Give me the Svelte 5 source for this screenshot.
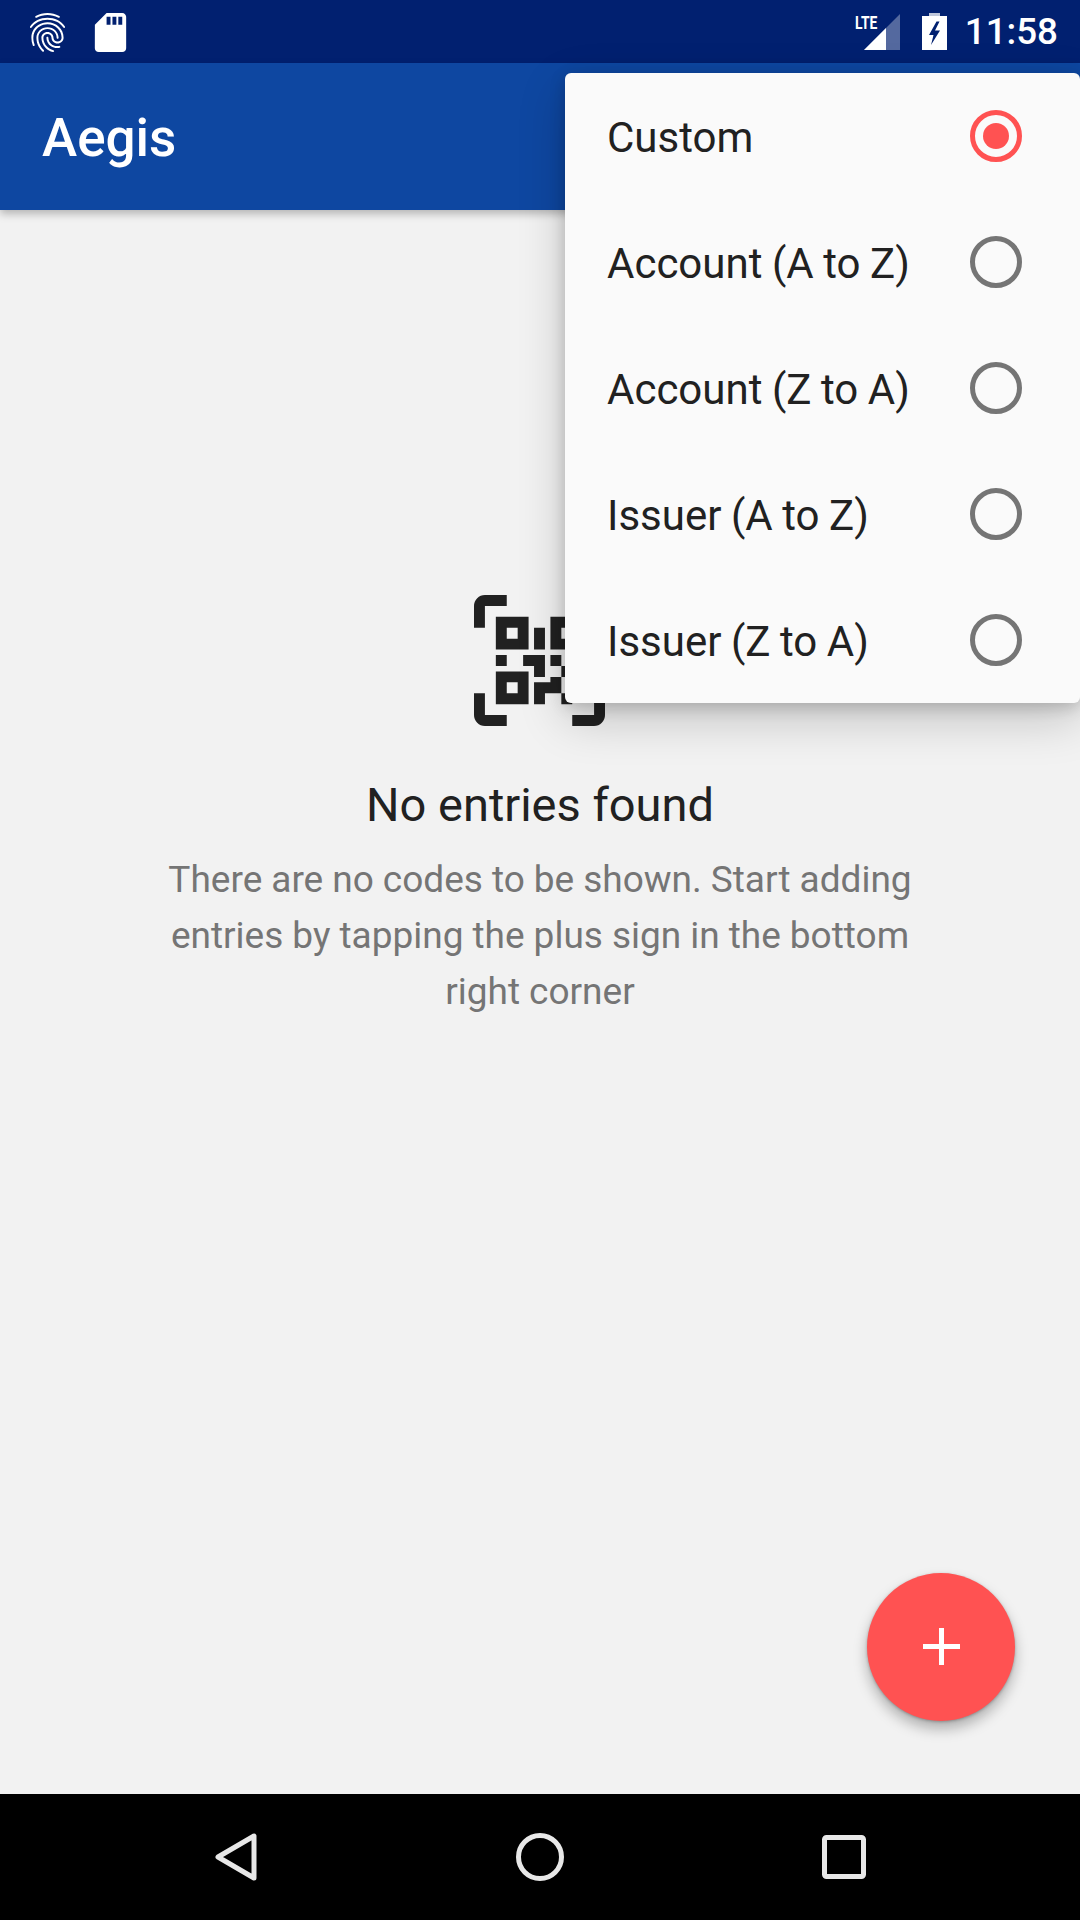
<script>
  const options = ['Custom', 'Account (A to Z)', 'Account (Z to A)', 'Issuer (A to Z)', 'Issuer (Z to A)'];
  let sort = $state('Custom');
</script>

<div class="screen">
  <header class="status">
    <svg class="ic-fp" viewBox="0 0 24 24"><path d="M17.81 4.47c-.08 0-.16-.02-.23-.06C15.66 3.42 14 3 12.01 3c-1.98 0-3.86.47-5.57 1.41-.24.13-.54.04-.68-.2-.13-.24-.04-.55.2-.68C7.82 2.52 9.86 2 12.01 2c2.13 0 3.99.47 6.03 1.52.25.13.34.43.21.67-.09.18-.26.28-.44.28zM3.5 9.72c-.1 0-.2-.03-.29-.09-.23-.16-.28-.47-.12-.7.99-1.4 2.25-2.5 3.75-3.27C9.98 4.04 14 4.03 17.15 5.65c1.5.77 2.76 1.86 3.75 3.25.16.22.11.54-.12.7-.23.16-.54.11-.7-.12-.9-1.26-2.04-2.25-3.39-2.94-2.87-1.47-6.54-1.47-9.4.01-1.36.7-2.5 1.7-3.4 2.96-.08.14-.23.21-.39.21zm6.25 12.07c-.13 0-.26-.05-.35-.15-.87-.87-1.34-1.43-2.01-2.64-.69-1.23-1.05-2.73-1.05-4.34 0-2.97 2.54-5.39 5.66-5.39s5.66 2.42 5.66 5.39c0 .28-.22.5-.5.5s-.5-.22-.5-.5c0-2.42-2.09-4.39-4.66-4.39-2.57 0-4.66 1.97-4.66 4.39 0 1.44.32 2.77.93 3.85.64 1.15 1.08 1.64 1.85 2.42.19.2.19.51 0 .71-.11.1-.24.15-.37.15zm7.17-1.85c-1.19 0-2.24-.3-3.1-.89-1.49-1.01-2.38-2.65-2.38-4.39 0-.28.22-.5.5-.5s.5.22.5.5c0 1.41.72 2.74 1.94 3.56.71.48 1.54.71 2.54.71.24 0 .64-.03 1.04-.1.27-.05.53.13.58.41.05.27-.13.53-.41.58-.57.11-1.07.12-1.21.12zM14.91 22c-.04 0-.09-.01-.13-.02-1.59-.44-2.63-1.03-3.72-2.1-1.4-1.39-2.17-3.24-2.17-5.22 0-1.62 1.38-2.94 3.08-2.94 1.7 0 3.08 1.32 3.08 2.94 0 1.07.93 1.94 2.08 1.94s2.08-.87 2.08-1.94c0-3.77-3.25-6.83-7.25-6.83-2.84 0-5.44 1.58-6.61 4.03-.39.81-.59 1.76-.59 2.8 0 .78.07 2.01.67 3.61.1.26-.03.55-.29.64-.26.1-.55-.04-.64-.29-.49-1.31-.73-2.61-.73-3.96 0-1.2.23-2.29.68-3.24 1.33-2.79 4.28-4.6 7.51-4.6 4.55 0 8.25 3.51 8.25 7.83 0 1.62-1.38 2.94-3.08 2.94s-3.08-1.32-3.08-2.94c0-1.07-.93-1.94-2.08-1.94s-2.08.87-2.08 1.94c0 1.71.66 3.31 1.87 4.51.95.94 1.86 1.46 3.27 1.85.27.07.42.35.35.61-.05.23-.26.38-.47.38z"/></svg>
    <svg class="ic-sd" viewBox="0 0 24 24"><path d="M18 2h-8L4.02 8 4 20c0 1.1.9 2 2 2h12c1.1 0 2-.9 2-2V4c0-1.1-.9-2-2-2zm-6 6h-2V4h2v4zm3 0h-2V4h2v4zm3 0h-2V4h2v4z"/></svg>
    <div class="spacer"></div>
    <div class="signal">
      <span class="lte">LTE</span>
      <svg width="36" height="36" viewBox="0 0 36 36">
        <path d="M36 0V36H0Z" fill="#fff" fill-opacity=".33"/>
        <path d="M22 14V36H0Z"/>
      </svg>
    </div>
    <svg class="ic-batt" width="25" height="37" viewBox="0 0 25 37">
      <path d="M7 0H18V3H25V11H0V3H7Z" fill-opacity=".75"/>
      <path d="M0 3H25V37H0Z"/>
      <path d="M14.5 8.5L7 22H11.5L9 32L18 17.5H13L17.5 8.5Z" fill="#012070"/>
    </svg>
    <span class="clock">11:58</span>
  </header>

  <div class="toolbar">Aegis</div>

  <main>
    <svg class="qr" viewBox="0 0 24 24"><path d="M4,4H10V10H4V4M20,4V10H14V4H20M14,15H16V13H14V11H16V13H18V11H20V13H18V15H20V18H18V20H16V18H13V20H11V16H14V15M16,15V18H18V15H16M4,20V14H10V20H4M6,6V8H8V6H6M16,6V8H18V6H16M6,16V18H8V16H6M4,11H6V13H4V11M9,11H13V15H11V13H9V11M11,6H13V10H11V6M2,2V6H0V2A2,2 0 0,1 2,0H6V2H2M22,0A2,2 0 0,1 24,2V6H22V2H18V0H22M2,18V22H6V24H2A2,2 0 0,1 0,22V18H2M22,22V18H24V22A2,2 0 0,1 22,24H18V22H22Z"/></svg>
    <h2>No entries found</h2>
    <p>There are no codes to be shown. Start adding entries by tapping the plus sign in the bottom right corner</p>
  </main>

  <nav>
    <svg width="42" height="48" viewBox="0 0 42 48"><path d="M39 3V45L3 24Z" /></svg>
    <svg width="48" height="48" viewBox="0 0 48 48"><circle cx="24" cy="24" r="21.5"/></svg>
    <svg width="44" height="44" viewBox="0 0 44 44"><rect x="2.5" y="2.5" width="39" height="39" rx="2"/></svg>
  </nav>

  <div class="menu">
    {#each options as opt}
      <button type="button" class="opt" onclick={() => (sort = opt)}>
        <span class="lbl">{opt}</span>
        <span class="radio" class:on={sort === opt}></span>
      </button>
    {/each}
  </div>

  <button type="button" class="fab" aria-label="Add">
    <svg width="37" height="37" viewBox="0 0 37 37"><path d="M16 0H21V16H37V21H21V37H16V21H0V16H16Z"/></svg>
  </button>
</div>

<style>
  :global(body) {
    margin: 0;
    font-family: Roboto, sans-serif;
  }

  .screen {
    position: relative;
    width: 1080px;
    height: 1920px;
    display: flex;
    flex-direction: column;
    overflow: hidden;
    background: #f2f2f2;
    color: #212121;
  }

  .status {
    height: 63px;
    flex: none;
    display: flex;
    align-items: center;
    background: #012070;
    color: #fff;
    padding: 0 22px 0 24px;
    box-sizing: border-box;
  }

  .status svg {
    fill: #fff;
    flex: none;
  }

  .ic-fp,
  .ic-sd {
    width: 47px;
    height: 47px;
    margin-top: 1px;
  }

  .ic-sd {
    margin-left: 16px;
  }

  .spacer {
    flex: 1;
  }

  .signal {
    position: relative;
    width: 36px;
    height: 36px;
  }

  .signal svg {
    display: block;
  }

  .lte {
    position: absolute;
    left: -9px;
    top: 0;
    font-size: 18.5px;
    line-height: 18px;
    font-weight: 700;
    transform: scaleX(0.75);
    transform-origin: left center;
  }

  .ic-batt {
    margin-left: 22px;
  }

  .clock {
    margin-left: 18px;
    font-size: 36.75px;
    font-weight: 500;
    line-height: 63px;
  }

  .toolbar {
    height: 147px;
    flex: none;
    box-sizing: border-box;
    display: flex;
    align-items: center;
    padding: 2px 0 0 42px;
    background: #0e47a1;
    color: #fff;
    font-size: 53px;
    font-weight: 500;
    box-shadow: 0 4px 8px rgb(0 0 0 / 25%);
    position: relative;
  }

  main {
    flex: 1;
    display: flex;
    flex-direction: column;
    align-items: center;
    padding-top: 385px;
  }

  .qr {
    width: 131px;
    height: 131px;
    margin-right: 2px;
    fill: #212121;
    display: block;
  }

  h2 {
    margin: 51px 0 0;
    font-size: 47px;
    line-height: 56px;
    font-weight: 400;
  }

  p {
    margin: 19px 0 0;
    width: 800px;
    text-align: center;
    font-size: 37px;
    line-height: 56px;
    word-spacing: -0.15px;
    color: #757575;
  }

  nav {
    height: 126px;
    flex: none;
    background: #000;
    position: relative;
    display: grid;
    grid-template-columns: 215px 42px 259px 48px 258px 44px;
    align-items: center;
    box-sizing: border-box;
  }

  nav svg {
    fill: none;
    stroke: #e8e8e8;
    stroke-width: 5;
    stroke-linejoin: round;
    display: block;
  }

  nav svg:nth-child(1) { grid-column: 2; }
  nav svg:nth-child(2) { grid-column: 4; }
  nav svg:nth-child(3) { grid-column: 6; }

  .menu {
    position: absolute;
    top: 73px;
    right: 0;
    width: 515px;
    background: #fafafa;
    border-radius: 6px;
    box-shadow: 0 16px 48px rgb(0 0 0 / 20%), 0 4px 16px rgb(0 0 0 / 18%);
  }

  .opt {
    display: flex;
    align-items: center;
    justify-content: space-between;
    width: 100%;
    height: 126px;
    padding: 0 58px 0 42px;
    box-sizing: border-box;
    background: none;
    border: 0;
    font: inherit;
    font-size: 42px;
    word-spacing: -0.9px;
    color: #212121;
    text-align: left;
    cursor: pointer;
  }

  .lbl {
    padding-top: 2px;
  }

  .radio {
    width: 52px;
    height: 52px;
    box-sizing: border-box;
    flex: none;
    border-radius: 50%;
    border: 5px solid #757575;
    position: relative;
  }

  .radio.on {
    border-color: #ff5252;
  }

  .radio.on::after {
    content: '';
    position: absolute;
    inset: 8px;
    border-radius: 50%;
    background: #ff5252;
  }

  .fab {
    position: absolute;
    left: 867px;
    top: 1573px;
    width: 148px;
    height: 148px;
    border-radius: 50%;
    border: 0;
    padding: 0 0 2px;
    background: #ff5252;
    display: flex;
    align-items: center;
    justify-content: center;
    box-shadow: 0 8px 14px rgb(0 0 0 / 28%), 0 1px 3px rgb(0 0 0 / 25%);
    cursor: pointer;
  }

  .fab svg {
    fill: #fff;
    display: block;
  }
</style>
